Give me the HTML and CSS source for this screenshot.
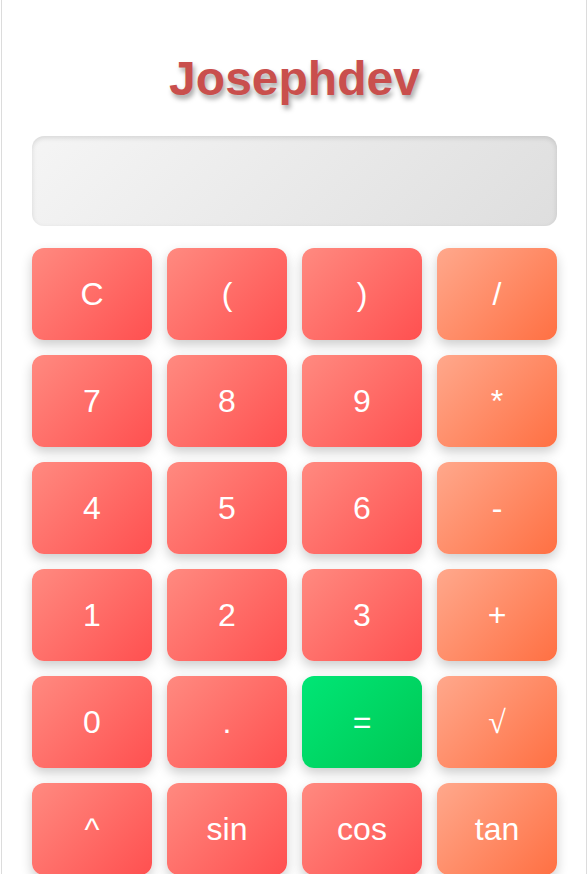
FILE: index.html
```html
<!DOCTYPE html>
<html>
<head>
<meta charset="utf-8">
<link rel="stylesheet" href="styles.css">
</head>
<body>
<div class="calculator">
  <h1 class="title">Josephdev</h1>
  <div class="display"></div>
  <div class="keys">
    <button class="key">C</button>
    <button class="key">(</button>
    <button class="key">)</button>
    <button class="key op">/</button>
    <button class="key">7</button>
    <button class="key">8</button>
    <button class="key">9</button>
    <button class="key op">*</button>
    <button class="key">4</button>
    <button class="key">5</button>
    <button class="key">6</button>
    <button class="key op">-</button>
    <button class="key">1</button>
    <button class="key">2</button>
    <button class="key">3</button>
    <button class="key op">+</button>
    <button class="key">0</button>
    <button class="key">.</button>
    <button class="key eq">=</button>
    <button class="key op sqrt">√</button>
    <button class="key">^</button>
    <button class="key">sin</button>
    <button class="key">cos</button>
    <button class="key op">tan</button>
  </div>
</div>
</body>
</html>
```

FILE: styles.css
```css
html, body {
  margin: 0;
  padding: 0;
  background: #ffffff;
  font-family: "Liberation Sans", Arial, sans-serif;
}

body {
  overflow: hidden;
  height: 874px;
}

.calculator {
  box-sizing: border-box;
  margin-left: 1px;
  width: 586px;
  min-height: 900px;
  border: 1px solid #dcdcdc;
  border-top: none;
  border-radius: 0 0 20px 20px;
  padding: 20px 29px 30px 30px;
  background: #ffffff;
}

.title {
  margin: 32px 0 30px;
  text-align: center;
  font-size: 48px;
  font-weight: bold;
  line-height: 54px;
  color: #c94f4d;
  text-shadow: 2px 4px 5px rgba(0, 0, 0, 0.35);
}

.display {
  height: 90px;
  border-radius: 12px;
  background: linear-gradient(135deg, #f5f5f5, #dedede);
  box-shadow: inset 0 2px 5px rgba(0, 0, 0, 0.12);
  margin-bottom: 22px;
}

.keys {
  display: grid;
  grid-template-columns: repeat(4, 120px);
  grid-auto-rows: 92px;
  gap: 15px;
}

.key {
  border: none;
  border-radius: 12px;
  font-family: "Liberation Sans", Arial, sans-serif;
  font-size: 32px;
  color: #ffffff;
  background: linear-gradient(135deg, #ff8a80, #ff5050);
  box-shadow: 0 5px 12px rgba(0, 0, 0, 0.2);
  padding: 0;
  cursor: pointer;
}

.key.op {
  background: linear-gradient(135deg, #ffa88c, #ff7043);
}

.key.eq {
  background: linear-gradient(135deg, #00e676, #00c853);
}

.key.sqrt {
  font-family: "Liberation Serif", serif;
}
```
